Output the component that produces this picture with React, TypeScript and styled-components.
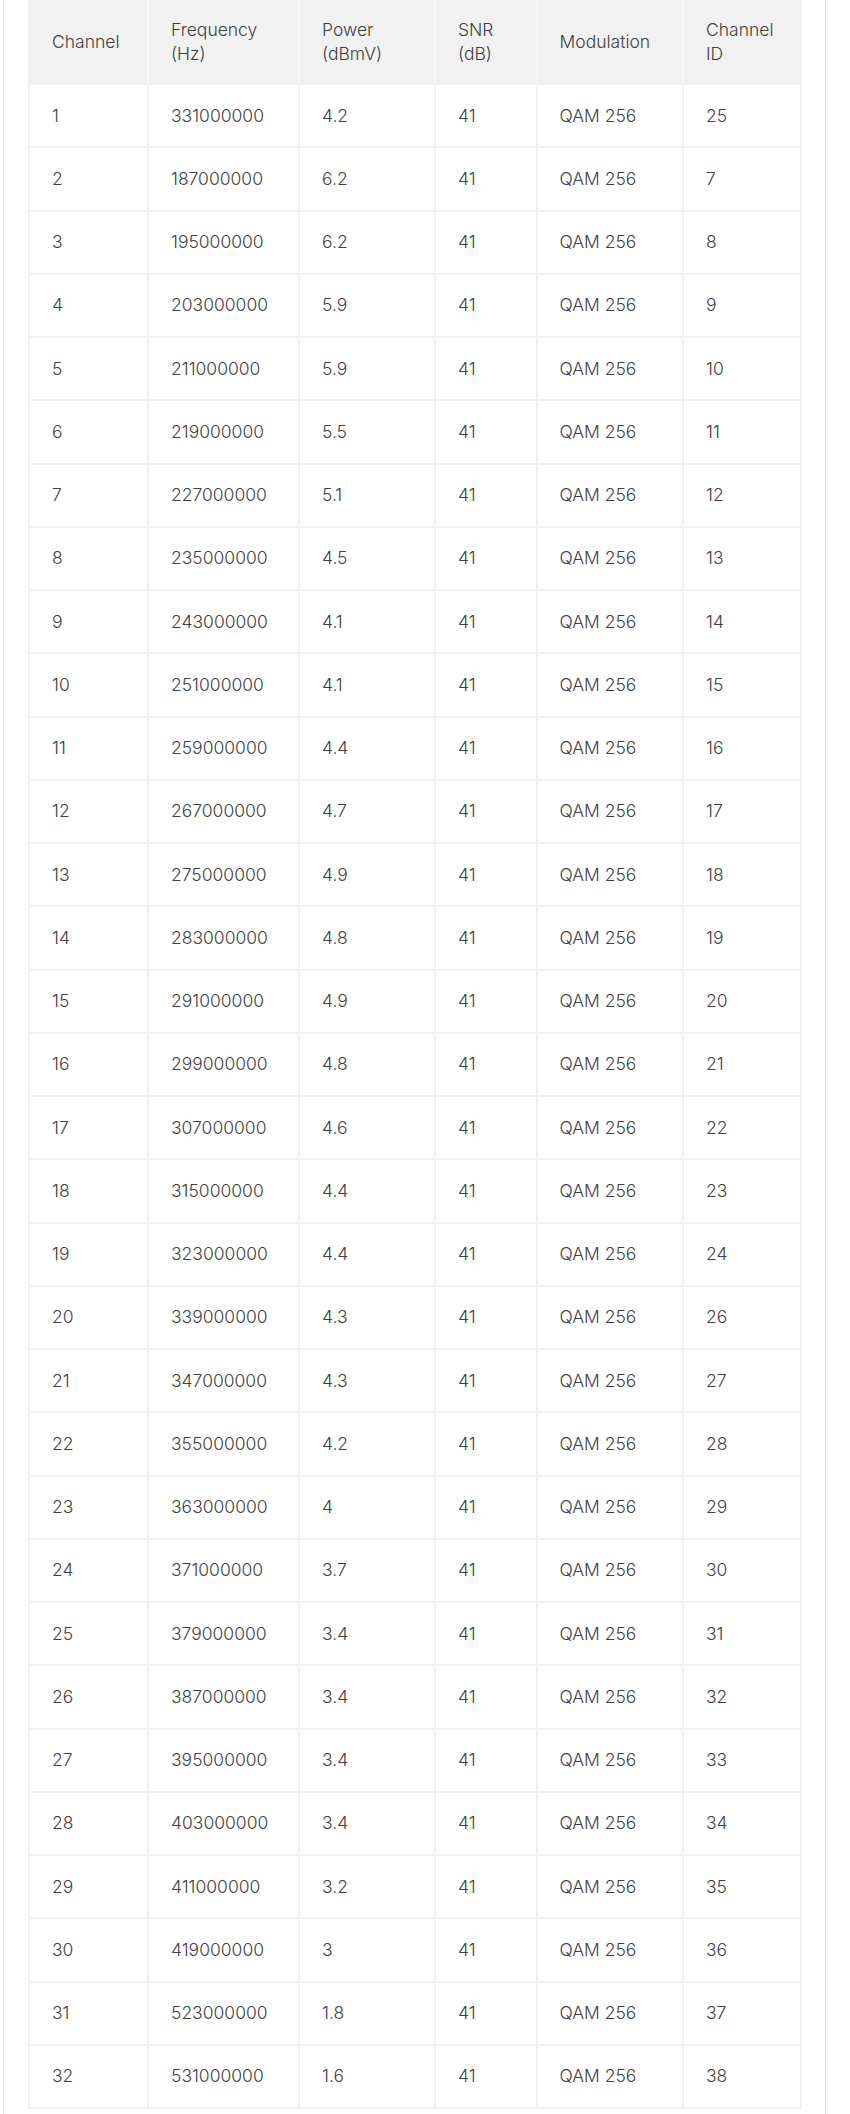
import React from "react";
import styled, { createGlobalStyle } from "styled-components";

const GlobalStyle = createGlobalStyle`
  html, body { margin: 0; padding: 0; background: #ffffff; }
  body { font-family: Inter, "Noto Sans", "Liberation Sans", sans-serif; }
`;

const Panel = styled.div`
  box-sizing: border-box;
  margin-left: 3px;
  width: 823px;
  min-height: 2114px;
  border-left: 1px solid #e6e6e6;
  border-right: 1px solid #dcdcdc;
  padding: 0 24px;
`;

const Table = styled.table`
  width: 772px;
  border-collapse: collapse;
  table-layout: fixed;
  color: #3f3f3f;
  font-size: 17.5px;
  font-weight: 300;
  line-height: 24px;
  border: 2px solid #f1f1f1;
  border-top: none;
`;

const HeadCell = styled.th<{ $w: number }>`
  width: ${(p) => p.$w}px;
  height: 84px;
  box-sizing: border-box;
  background: #f1f1f1;
  border-left: 2px solid #f7f7f7;
  border-right: 2px solid #f7f7f7;
  text-align: left;
  font-weight: 300;
  padding: 0 22px;
  vertical-align: middle;
  &:first-child { border-left-color: #f1f1f1; }
  &:last-child { border-right-color: #f1f1f1; }
`;

const Row = styled.tr`
  height: 63.25px;
`;

const Cell = styled.td`
  border: 2px solid #f1f1f1;
  padding: 0 22px;
  vertical-align: middle;
  white-space: nowrap;
`;

const columns: { label: React.ReactNode; w: number }[] = [
  { label: "Channel", w: 119 },
  { label: <>Frequency<br />(Hz)</>, w: 151 },
  { label: <>Power<br />(dBmV)</>, w: 136 },
  { label: <>SNR<br />(dB)</>, w: 101.5 },
  { label: "Modulation", w: 146.5 },
  { label: <>Channel<br />ID</>, w: 118 },
];

const rows: [number, number, string, number][] = [
  [1, 331000000, "4.2", 25],
  [2, 187000000, "6.2", 7],
  [3, 195000000, "6.2", 8],
  [4, 203000000, "5.9", 9],
  [5, 211000000, "5.9", 10],
  [6, 219000000, "5.5", 11],
  [7, 227000000, "5.1", 12],
  [8, 235000000, "4.5", 13],
  [9, 243000000, "4.1", 14],
  [10, 251000000, "4.1", 15],
  [11, 259000000, "4.4", 16],
  [12, 267000000, "4.7", 17],
  [13, 275000000, "4.9", 18],
  [14, 283000000, "4.8", 19],
  [15, 291000000, "4.9", 20],
  [16, 299000000, "4.8", 21],
  [17, 307000000, "4.6", 22],
  [18, 315000000, "4.4", 23],
  [19, 323000000, "4.4", 24],
  [20, 339000000, "4.3", 26],
  [21, 347000000, "4.3", 27],
  [22, 355000000, "4.2", 28],
  [23, 363000000, "4", 29],
  [24, 371000000, "3.7", 30],
  [25, 379000000, "3.4", 31],
  [26, 387000000, "3.4", 32],
  [27, 395000000, "3.4", 33],
  [28, 403000000, "3.4", 34],
  [29, 411000000, "3.2", 35],
  [30, 419000000, "3", 36],
  [31, 523000000, "1.8", 37],
  [32, 531000000, "1.6", 38],
];

export default function App() {
  return (
    <>
      <GlobalStyle />
      <Panel>
        <Table>
          <thead>
            <tr>
              {columns.map((c, i) => (
                <HeadCell key={i} $w={c.w}>
                  {c.label}
                </HeadCell>
              ))}
            </tr>
          </thead>
          <tbody>
            {rows.map(([ch, freq, pow, id]) => (
              <Row key={ch}>
                <Cell>{ch}</Cell>
                <Cell>{freq}</Cell>
                <Cell>{pow}</Cell>
                <Cell>41</Cell>
                <Cell>QAM 256</Cell>
                <Cell>{id}</Cell>
              </Row>
            ))}
          </tbody>
        </Table>
      </Panel>
    </>
  );
}
